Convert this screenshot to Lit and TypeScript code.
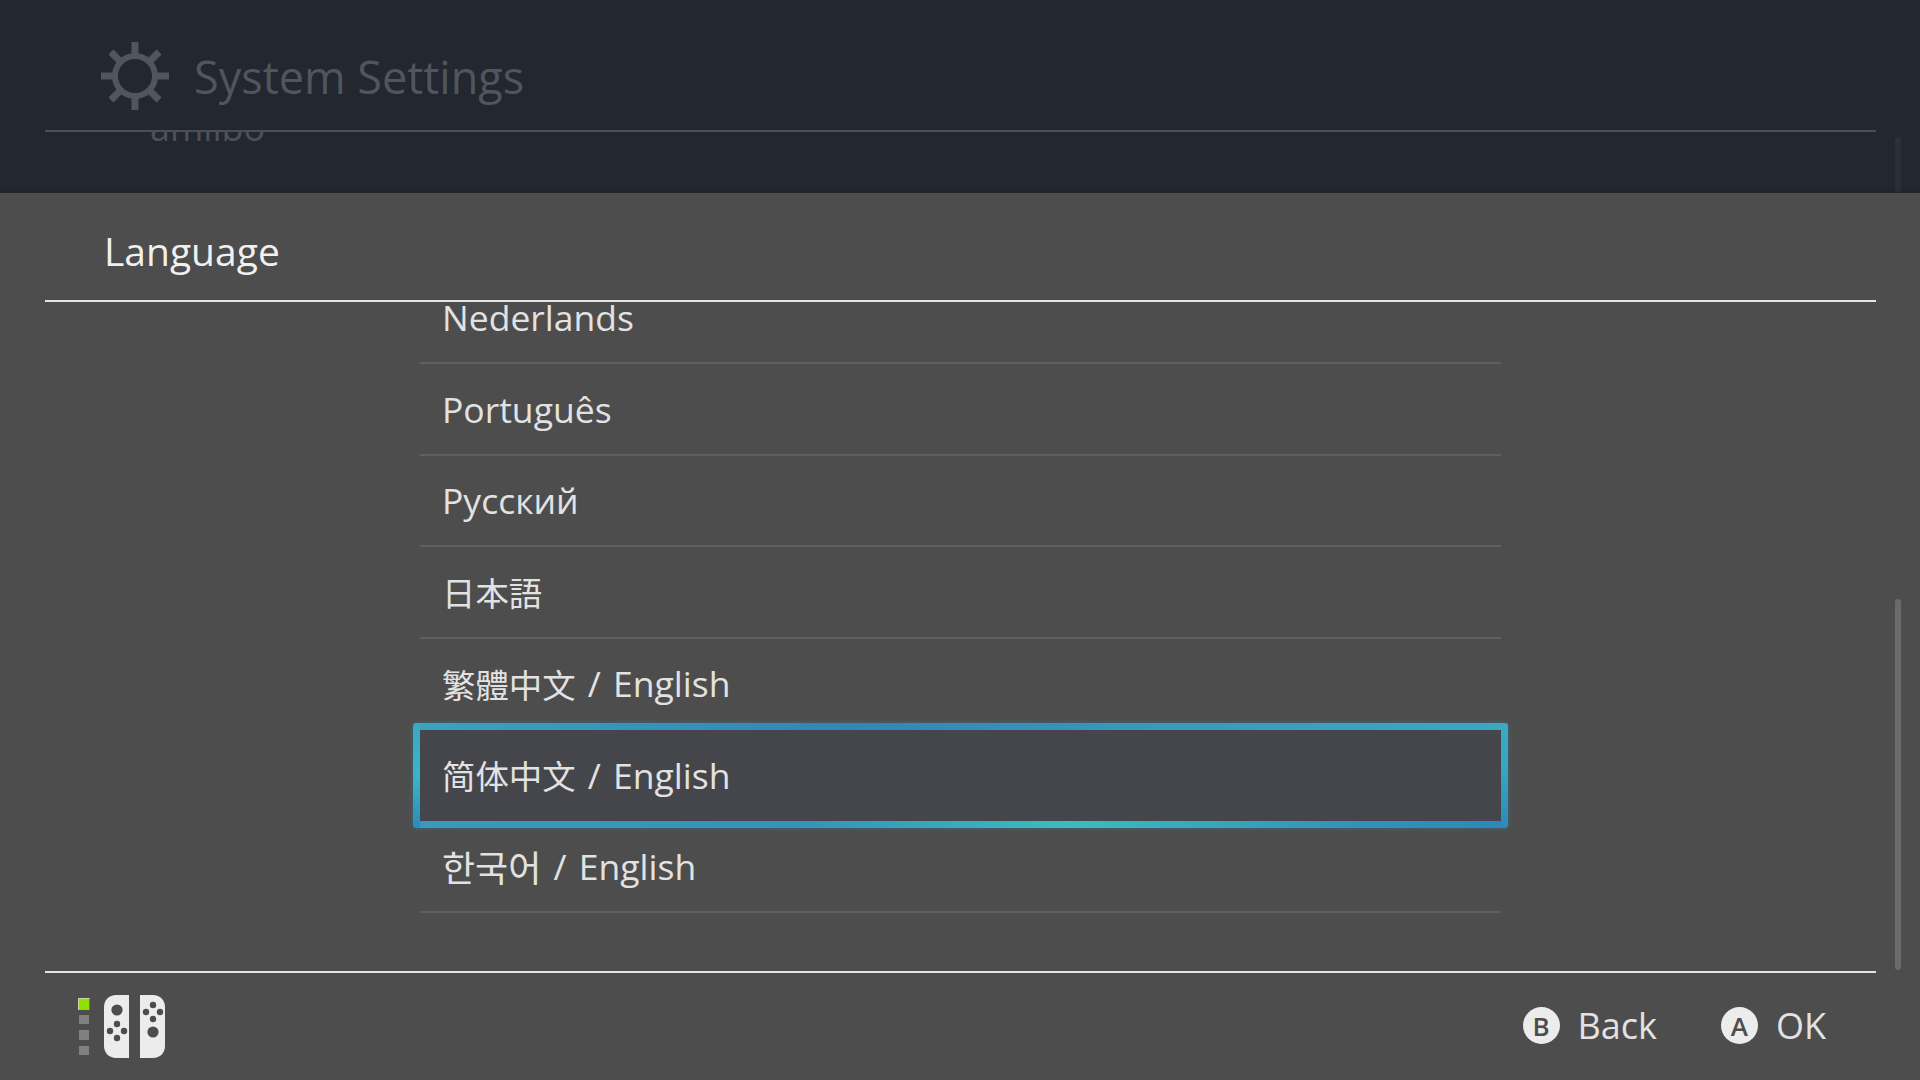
import { LitElement, html, css, svg } from "lit";
import { customElement } from "lit/decorators.js";

type Lang = { cjk?: string; lang?: string; rest: string; sel?: boolean; cls?: string };
const LANGS: Lang[] = [
  { rest: "Nederlands" },
  { rest: "Português" },
  { rest: "Русский" },
  { cjk: "日本語", lang: "ja", rest: "" },
  { cjk: "繁體中文", lang: "zh-TW", rest: " / English" },
  { cjk: "简体中文", lang: "zh-CN", rest: " / English", sel: true },
  { cjk: "한국어", lang: "ko", rest: " / English", cls: "ko" },
];

const teeth = [0, 45, 90, 135, 180, 225, 270, 315];

const dpad = (cx: number, cy: number) => svg`
  <circle cx=${cx} cy=${cy - 7} r="3.2" /><circle cx=${cx} cy=${cy + 7} r="3.2" />
  <circle cx=${cx - 7} cy=${cy} r="3.2" /><circle cx=${cx + 7} cy=${cy} r="3.2" />`;

@customElement("app-root")
export class AppRoot extends LitElement {
  static styles = css`
    :host {
      display: block;
      width: 1920px;
      height: 1080px;
      overflow: hidden;
      font-family: "Open Sans", "Noto Sans", "Noto Sans CJK SC", sans-serif;
    }
    .screen { display: flex; flex-direction: column; height: 1080px; background: #4d4d4d; }

    .behind { position: relative; height: 193px; flex: none; overflow: hidden; background: #23272f; }
    .topbar {
      display: flex; align-items: center; box-sizing: border-box;
      height: 132px; margin: 0 44px 0 45px; padding: 20px 0 0 55px;
      border-bottom: 2px solid #4a4e57; gap: 24px;
      position: relative; z-index: 1; background: #23272f;
    }
    .gear { width: 70px; height: 70px; flex: none; margin-top: 1px; }
    .title { font-size: 45px; color: #50555e; line-height: 1; margin-top: 3px; }
    .under { margin: -29px 0 0 150px; font-size: 36px; line-height: 50px; color: #4d5159; }
    .behind-bar {
      position: absolute; right: 19px; top: 137px; bottom: 0; width: 6px;
      border-radius: 3px; background: #2c3037;
    }

    .panel { flex: 1; display: flex; flex-direction: column; position: relative; box-shadow: 0 -2px 6px rgba(0, 0, 0, .14); min-height: 0; }
    .head {
      flex: none; height: 109px; box-sizing: border-box; margin: 0 44px 0 45px;
      padding: 8px 0 0 59px; display: flex; align-items: center;
      border-bottom: 2px solid #e4e4e4;
      font-size: 39px; color: #f0f0f0;
    }
    .list-wrap { flex: 1; overflow: hidden; min-height: 0; }
    .list { width: 1081px; margin: -29.5px 0 0 420px; }
    .row {
      position: relative; height: 91.5px; box-sizing: border-box;
      padding-left: 22px; display: flex; align-items: center;
      border-bottom: 2px solid #5f5f5f;
      font-size: 35.5px; color: #e2e2e2; white-space: pre; word-spacing: 3px;
    }
    .cjk { font-family: "Noto Sans CJK SC", sans-serif; font-size: 33.4px; }
    .ko .cjk { font-family: "Noto Sans CJK KR", sans-serif; font-size: 36px; }
    .row.sel { background: #45464c; border-bottom-color: transparent; }
    .row.sel::before {
      content: ""; position: absolute; inset: -7px -7px -8px; border-radius: 3px; pointer-events: none;
      box-shadow: 0 0 6px rgba(45, 150, 190, .35);
      background:
        linear-gradient(180deg, #3aa7c1 0%, #3db4c6 50%, #2c8aba 100%) left / 7px 100% no-repeat,
        linear-gradient(180deg, #3ba9c2 0%, #3aa7c1 40%, #2c8aba 100%) right / 7px 100% no-repeat,
        linear-gradient(90deg, #3aa3c0 0%, #3385b8 40%, #3a9abd 70%, #3ba9c2 100%) top / 100% 7px no-repeat,
        linear-gradient(90deg, #3a9abd 0%, #3493bb 35%, #3abdbd 60%, #3493bb 85%, #2c88ba 100%) bottom / 100% 7px no-repeat;
    }
    .list-bar {
      position: absolute; right: 19px; top: 406px; height: 371px; width: 6px;
      border-radius: 3px; background: #6b6b6b;
    }

    .foot {
      flex: none; height: 109px; box-sizing: border-box; margin: 0 44px 0 45px;
      border-top: 2px solid #e4e4e4; display: flex; align-items: center; justify-content: space-between;
      padding: 0 50px 2px 33px;
    }
    .ctrl { display: flex; align-items: center; gap: 14px; margin-top: 2px; }
    .leds { display: flex; flex-direction: column; align-items: center; gap: 6px; width: 12px; }
    .led { width: 9.5px; height: 9.5px; background: #808080; }
    .led.on {
      width: 12px; height: 12px; box-sizing: border-box; background: #8fe000;
      border-left: 1px solid #c5d8a0; border-top: 1px solid #c5d8a0;
      border-right: 1px solid #5f9400; margin-bottom: -1px;
    }
    .joy { width: 61px; height: 63px; display: block; }
    .hints { display: flex; align-items: center; gap: 64px; }
    .hint { display: flex; align-items: center; gap: 18px; font-size: 36px; color: #e2e2e2; line-height: 1; }
    .btn {
      width: 37px; height: 37px; border-radius: 50%; background: #ececec; color: #4d4d4d;
      display: flex; align-items: center; justify-content: center;
      font-size: 26px; font-weight: 600; line-height: 1;
    }
  `;

  render() {
    return html`
      <div class="screen">
        <div class="behind">
          <div class="topbar">
            <svg class="gear" viewBox="0 0 70 70" fill="none" stroke="#50555e">
              <circle cx="35" cy="35" r="20" stroke-width="6" />
              ${teeth.map((a) => svg`<line x1="35" y1="1" x2="35" y2="14" stroke-width="7" transform="rotate(${a} 35 35)" />`)}
            </svg>
            <div class="title">System Settings</div>
          </div>
          <div class="under">amiibo</div>
          <div class="behind-bar"></div>
        </div>
        <div class="panel">
          <div class="head">Language</div>
          <div class="list-wrap">
            <div class="list">
              ${LANGS.map(
                (l) => html`<div class="row ${l.sel ? "sel" : ""} ${l.cls ?? ""}">${l.cjk ? html`<span class="cjk" lang=${l.lang ?? ""}>${l.cjk}</span>` : ""}<span>${l.rest}</span></div>`
              )}
            </div>
          </div>
          <div class="list-bar"></div>
          <div class="foot">
            <div class="ctrl">
              <div class="leds">
                <div class="led on"></div><div class="led"></div><div class="led"></div><div class="led"></div>
              </div>
              <svg class="joy" viewBox="0 0 61 63">
                <path fill="#ececec" d="M25 0V63H12C5 63 0 58 0 51V12C0 5 5 0 12 0Z" />
                <path fill="#ececec" d="M36 0V63H49C56 63 61 58 61 51V12C61 5 56 0 49 0Z" />
                <g fill="#4d4d4d">
                  <circle cx="13" cy="15" r="5.6" />
                  ${dpad(13, 36)}
                  <circle cx="49" cy="37" r="5.6" />
                  ${dpad(49, 17)}
                </g>
              </svg>
            </div>
            <div class="hints">
              <div class="hint"><span class="btn">B</span><span>Back</span></div>
              <div class="hint"><span class="btn">A</span><span>OK</span></div>
            </div>
          </div>
        </div>
      </div>
    `;
  }
}
